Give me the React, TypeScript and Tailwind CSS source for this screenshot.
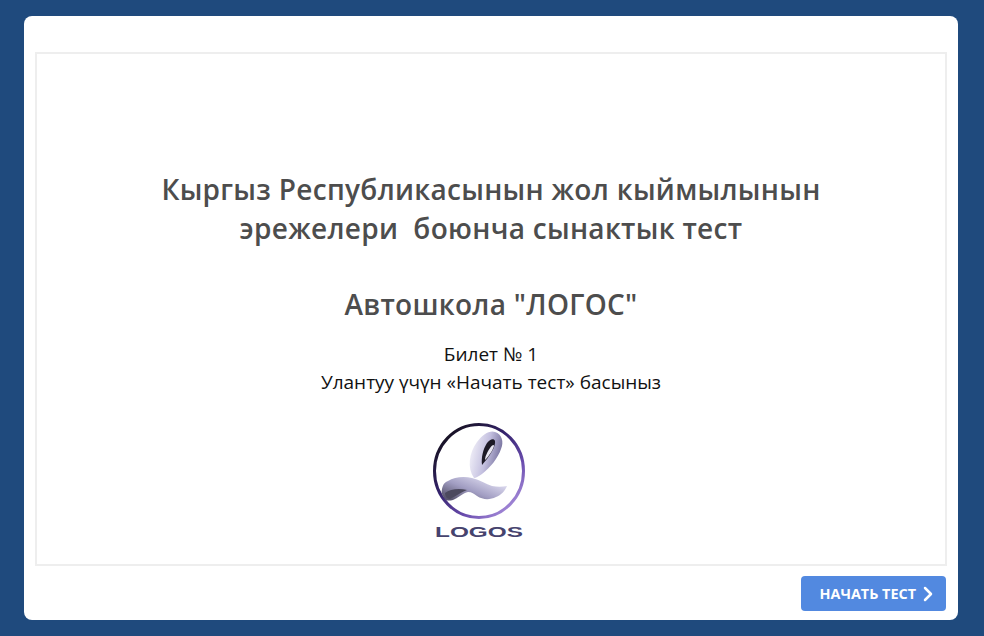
import { ChevronRight } from 'lucide-react'

const LogosMark = () => (
  <svg width="98" height="120" viewBox="0 0 98 120" className="block">
    <defs>
      <linearGradient id="ring" x1="0.1" y1="0.1" x2="0.85" y2="0.95">
        <stop offset="0" stopColor="#15101d" />
        <stop offset="0.4" stopColor="#35246e" />
        <stop offset="0.72" stopColor="#6a4cae" />
        <stop offset="1" stopColor="#a98fdc" />
      </linearGradient>
      <linearGradient id="letter" x1="0" y1="0.2" x2="1" y2="0.5">
        <stop offset="0" stopColor="#f6f5fb" />
        <stop offset="0.55" stopColor="#c3bfdf" />
        <stop offset="1" stopColor="#716c99" />
      </linearGradient>
      <linearGradient id="foot" x1="0.1" y1="0.9" x2="0.9" y2="0.2">
        <stop offset="0" stopColor="#5a566f" />
        <stop offset="0.45" stopColor="#a19dc2" />
        <stop offset="1" stopColor="#e0def2" />
      </linearGradient>
    </defs>
    <ellipse cx="49" cy="51" rx="44.5" ry="46.5" fill="none" stroke="url(#ring)" strokeWidth="3" />
    <path d="M44 58 C37 48 39 33 47 22 C53 14 60 10 65 12 C72 14 74 22 71 29 C68 38 60 48 52 54 C49 56 46 58 44 58 Z" fill="url(#letter)" />
    <path d="M57 23 C60 19 64 18 65 21 C66 26 60 36 52 45 C51 38 53 29 57 23 Z" fill="#1d1a26" />
    <path d="M60 28 C62 25 64 24 64 26 C63 30 59 36 55 40 C55 36 58 31 60 28 Z" fill="#e8e6f2" />
    <path d="M12 69 C13 64 15 62 18 61 C24 57 34 56 42 58 C50 60 56 64 62 66 C67 67 72 67 77 66 C75 71 71 75 66 77 C60 80 53 80 47 76 C44 74 42 72 38 72 C33 73 29 77 25 79 C21 81 17 81 15 79 C12 76 11 72 12 69 Z" fill="url(#foot)" />
    <path d="M15 73 C20 69 29 68 37 70 C31 72 25 77 20 79 C17 79 15 76 15 73 Z" fill="#4c495e" />
    <text x="5" y="117" textLength="88" lengthAdjust="spacingAndGlyphs" fontFamily="'Liberation Sans', sans-serif" fontSize="14" fontWeight="700" fill="#46436e">
      LOGOS
    </text>
  </svg>
)

export default function App() {
  return (
    <div className="h-[636px] w-[984px] overflow-hidden bg-[#1f4a7d] pt-4 pr-[26px] pl-6 font-['Open_Sans',sans-serif]">
      <div className="flex h-[604px] flex-col rounded-lg bg-white px-[11px] pt-9">
        <div className="flex h-[514px] flex-col items-center border-2 border-[#eeeeee] pt-[115.5px]">
          <h1 className="text-center text-[28px] leading-[39px] font-semibold tracking-[0.3px] text-[#4d4d4d]">
            Кыргыз Республикасынын жол кыймылынын
            <br />
            эрежелери&nbsp; боюнча сынактык тест
          </h1>
          <h2 className="mt-[37.5px] text-[28px] leading-[39.5px] font-semibold tracking-[0.3px] text-[#4d4d4d]">Автошкола "ЛОГОС"</h2>
          <p className="mt-[15.5px] text-center text-[19px] leading-7 text-[#111111]">
            Билет № 1
            <br />
            Улантуу үчүн «Начать тест» басыныз
          </p>
          <div className="mt-6 mr-6">
            <LogosMark />
          </div>
        </div>
        <div className="flex justify-end pt-2.5 pr-px">
          <button className="flex h-[35px] w-[145px] items-center justify-end rounded bg-[#5289e0] pr-1.5 text-[14.4px] font-bold text-white">
            НАЧАТЬ ТЕСТ
            <ChevronRight size={24} strokeWidth={2.5} />
          </button>
        </div>
      </div>
    </div>
  )
}
